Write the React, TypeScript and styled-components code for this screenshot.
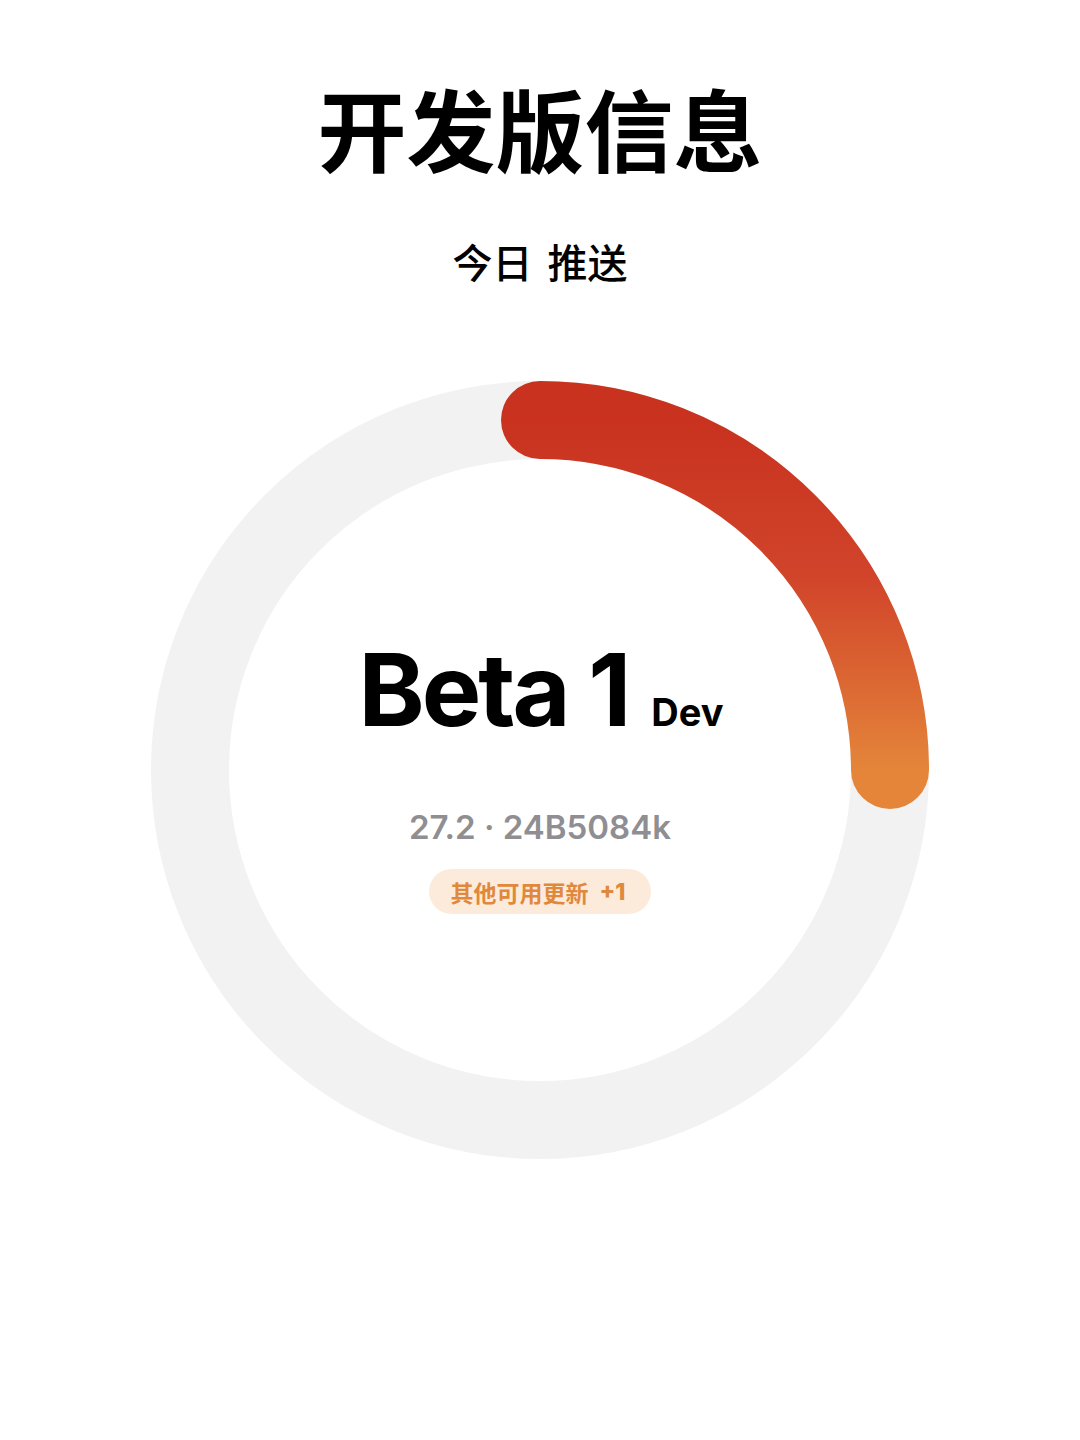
import React from 'react';
import styled, { createGlobalStyle } from 'styled-components';

const GlobalStyle = createGlobalStyle`
    html, body {
        margin: 0;
        padding: 0;
        background: #ffffff;
    }
    body {
        font-family: Inter, "Noto Sans CJK SC", sans-serif;
    }
`;

const Page = styled.div`
    width: 1080px;
    height: 1440px;
    display: flex;
    flex-direction: column;
    align-items: center;
    background: #fff;
`;

const Title = styled.h1`
    margin: 77px 0 0;
    font-family: "Noto Sans CJK SC", sans-serif;
    font-weight: 700;
    font-size: 89px;
    line-height: 100px;
    color: #000;
`;

const Subtitle = styled.h2`
    margin: 59px 0 0;
    font-family: "Noto Sans CJK SC", sans-serif;
    font-weight: 500;
    font-size: 40px;
    line-height: 50px;
    color: #000;
    word-spacing: 6px;
`;

const RingStage = styled.div`
    margin-top: 95px;
    width: 778px;
    height: 778px;
    display: grid;
    place-items: center;

    & > * {
        grid-area: 1 / 1;
    }
`;

const RingSvg = styled.svg`
    width: 778px;
    height: 778px;
    display: block;
`;

const Center = styled.div`
    display: flex;
    flex-direction: column;
    align-items: center;
    padding-top: 14px;
`;

const VersionRow = styled.div`
    display: flex;
    align-items: baseline;
    gap: 23px;
    margin-left: 2px;
`;

const VersionName = styled.span`
    font-family: Inter, sans-serif;
    font-weight: 700;
    font-size: 100px;
    line-height: 1;
    letter-spacing: -3px;
    color: #000;
`;

const Channel = styled.span`
    font-family: Inter, sans-serif;
    font-weight: 700;
    font-size: 38px;
    line-height: 1;
    color: #000;
`;

const Build = styled.div`
    margin-top: 67px;
    font-family: Inter, sans-serif;
    font-weight: 600;
    font-size: 33px;
    line-height: 40px;
    color: #8e8e93;
`;

const Badge = styled.div`
    margin-top: 22px;
    height: 45px;
    padding: 0 26px 0 22px;
    border-radius: 23px;
    background: #fcebdb;
    display: flex;
    align-items: center;
    gap: 11px;
    font-family: "Noto Sans CJK SC", sans-serif;
    font-weight: 700;
    font-size: 23px;
    color: #e0883c;
`;

const BadgeCount = styled.span`
    font-family: Inter, sans-serif;
    font-weight: 800;
    font-size: 23px;
`;

const R = 350;
const C = 389;

const Ring: React.FC = () => (
    <RingSvg viewBox="0 0 778 778">
        <defs>
            <linearGradient id="arcGrad" x1="0" y1="0" x2="0" y2="1">
                <stop offset="0%" stopColor="#c8321f" />
                <stop offset="45%" stopColor="#d1442a" />
                <stop offset="100%" stopColor="#e4853a" />
            </linearGradient>
        </defs>
        <circle cx={C} cy={C} r={R} fill="none" stroke="#f2f2f2" strokeWidth={78} />
        <path
            d={`M ${C} ${C - R} A ${R} ${R} 0 0 1 ${C + R} ${C}`}
            fill="none"
            stroke="url(#arcGrad)"
            strokeWidth={78}
            strokeLinecap="round"
        />
    </RingSvg>
);

const App: React.FC = () => (
    <Page>
        <GlobalStyle />
        <Title>开发版信息</Title>
        <Subtitle>今日 推送</Subtitle>
        <RingStage>
            <Ring />
            <Center>
                <VersionRow>
                    <VersionName>Beta 1</VersionName>
                    <Channel>Dev</Channel>
                </VersionRow>
                <Build>27.2 · 24B5084k</Build>
                <Badge>
                    其他可用更新<BadgeCount>+1</BadgeCount>
                </Badge>
            </Center>
        </RingStage>
    </Page>
);

export default App;
